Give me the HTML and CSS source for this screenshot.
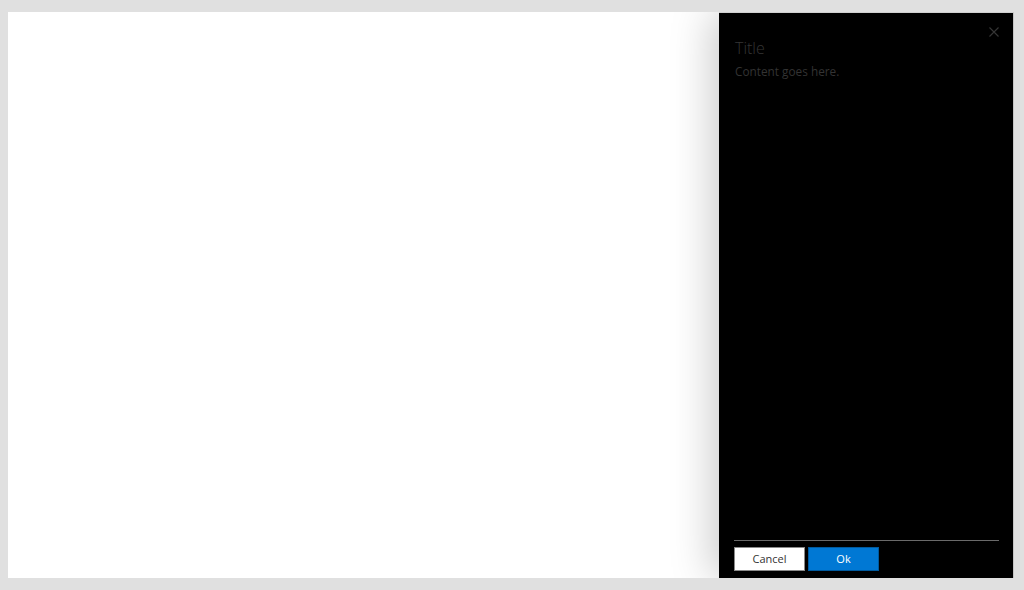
FILE: index.html
```html
<!DOCTYPE html>
<html>
<head>
<meta charset="utf-8">
<link rel="stylesheet" href="styles.css">
</head>
<body>
<div class="frame">
  <aside class="panel">
    <button class="close" aria-label="Close">
      <svg width="10" height="10" viewBox="0 0 10 10"><path d="M0.5 0.5L9.5 9.5M9.5 0.5L0.5 9.5" stroke="#363636" stroke-width="1.1" fill="none"/></svg>
    </button>
    <div class="body">
      <div class="title">Title</div>
      <div class="content">Content goes here.</div>
    </div>
    <div class="footer">
      <button class="btn btn-default">Cancel</button>
      <button class="btn btn-primary">Ok</button>
    </div>
  </aside>
</div>
</body>
</html>
```
FILE: styles.css
```css
html, body {
  margin: 0;
  height: 100%;
}
body {
  background: #e0e0e0;
  padding: 12px 10px 12px 8px;
  box-sizing: border-box;
  font-family: "Open Sans", "Liberation Sans", sans-serif;
}
.frame {
  position: relative;
  background: #ffffff;
  height: 100%;
  overflow: hidden;
}
.panel {
  position: absolute;
  top: 0;
  right: 0;
  bottom: 0;
  width: 295px;
  box-sizing: border-box;
  background: #000000;
  border-right: 1px solid #c4c4c4;
  border-top: 1px solid #d0d0d0;
  box-shadow: -6px 0 40px rgba(0, 0, 0, 0.22);
  display: flex;
  flex-direction: column;
  padding: 24px 14px 7px 15px;
}
.close {
  position: absolute;
  top: 14px;
  right: 14px;
  width: 10px;
  height: 10px;
  padding: 0;
  border: 0;
  background: transparent;
  display: block;
}
.close svg { display: block; }
.body {
  flex: 1;
  padding-left: 1px;
}
.title {
  font-size: 16px;
  font-weight: 300;
  color: #353535;
  line-height: 22px;
}
.content {
  font-size: 11.8px;
  color: #333333;
  line-height: 16px;
  margin-top: 4px;
}
.footer {
  border-top: 1px solid #6a6a6a;
  padding-top: 6px;
  display: flex;
  gap: 3px;
}
.btn {
  width: 71px;
  height: 24px;
  box-sizing: border-box;
  font-family: "Open Sans", "Liberation Sans", sans-serif;
  font-size: 11px;
  padding: 0;
  line-height: 22px;
}
.btn-default {
  background: #ffffff;
  border: 1px solid #8a8a8a;
  color: #333333;
}
.btn-primary {
  background: #0078d4;
  border: 1px solid #005a9e;
  color: #ffffff;
}
```
